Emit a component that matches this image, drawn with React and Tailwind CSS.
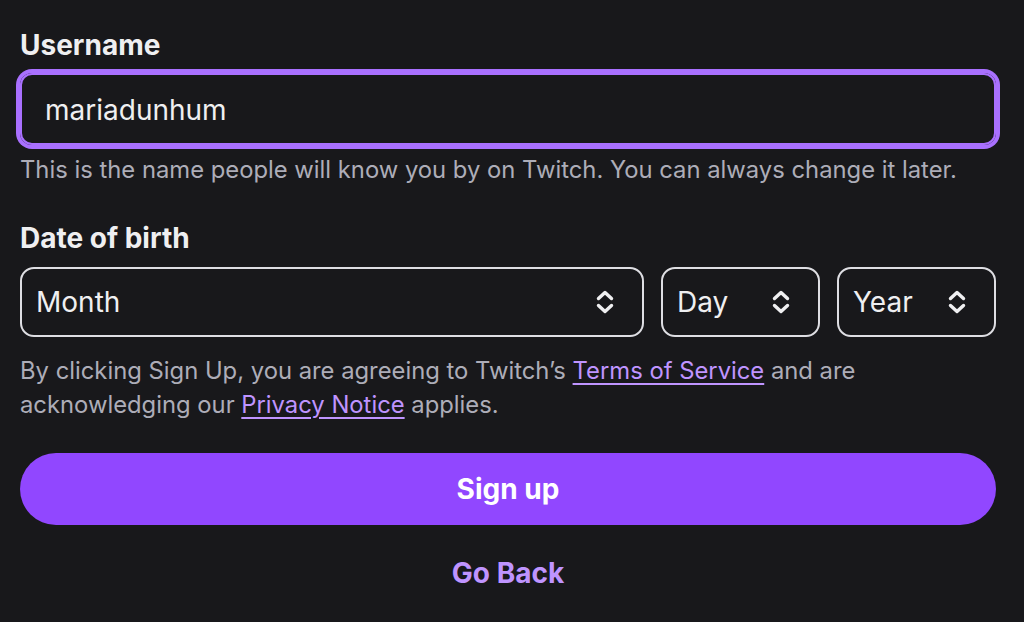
import React from 'react';

function UpDown() {
  return (
    <svg width="20" height="28" viewBox="0 0 20 28" fill="none" className="shrink-0">
      <path d="M3.5 10.5 L10 4.5 L16.5 10.5" stroke="#efeff1" strokeWidth="3.4" strokeLinecap="round" strokeLinejoin="round" />
      <path d="M3.5 17.5 L10 23.5 L16.5 17.5" stroke="#efeff1" strokeWidth="3.4" strokeLinecap="round" strokeLinejoin="round" />
    </svg>
  );
}

function Select({ label, className }) {
  return (
    <div className={`h-[70px] border-2 border-[#dedee3] rounded-[14px] flex items-center justify-between pl-[14px] pr-[27px] ${className}`}>
      <span className="text-[28px] text-[#efeff1]">{label}</span>
      <UpDown />
    </div>
  );
}

export default function App() {
  return (
    <div
      className="min-h-[622px] bg-[#18181b] pl-5 pr-[28px] pt-[27px] text-[#efeff1]"
      style={{ fontFamily: 'Inter, "Noto Sans", sans-serif' }}
    >
      {/* Username */}
      <div className="text-[28px] leading-[36px] font-bold">Username</div>
      <div className="mt-[10px] h-[72px] rounded-[12px] border-2 border-[#a970ff] ring-4 ring-[#a970ff] flex items-center px-[23px] pt-[2px]">
        <span className="text-[28px]">mariadunhum</span>
      </div>
      <p className="mt-[10px] text-[23.8px] leading-[30px] text-[#adadb8] whitespace-nowrap">
        This is the name people will know you by on Twitch. You can always change it later.
      </p>

      {/* Date of birth */}
      <div className="mt-[35px] text-[28px] leading-[36px] font-bold">Date of birth</div>
      <div className="mt-[11px] flex gap-[17px]">
        <Select label="Month" className="flex-1" />
        <Select label="Day" className="w-[159px]" />
        <Select label="Year" className="w-[159px]" />
      </div>

      <p className="mt-[17px] text-[23.8px] leading-[34px] text-[#adadb8]">
        By clicking Sign Up, you are agreeing to Twitch’s{' '}
        <a className="text-[#bf94ff] underline underline-offset-4">Terms of Service</a> and are
        <br />
        acknowledging our <a className="text-[#bf94ff] underline underline-offset-4">Privacy Notice</a> applies.
      </p>

      <button className="mt-[31px] w-full h-[72px] rounded-full bg-[#9147ff] text-white text-[28px] font-bold">
        Sign up
      </button>

      <div className="mt-[30px] text-center text-[28px] leading-[36px] font-bold text-[#bf94ff]">
        Go Back
      </div>
    </div>
  );
}
